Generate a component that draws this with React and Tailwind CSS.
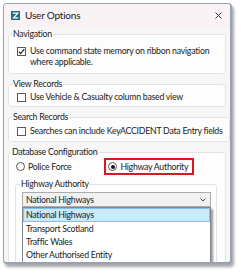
import React from "react";

function Check({ checked }) {
  return (
    <span className="flex h-[9px] w-[9px] shrink-0 items-center justify-center border border-[#5a5a5a] bg-white">
      {checked && (
        <svg width="7" height="7" viewBox="0 0 7 7">
          <path d="M0.8 3.6 L2.7 5.6 L6.3 1.2" fill="none" stroke="#222" strokeWidth="1.2" />
        </svg>
      )}
    </span>
  );
}

function Radio({ checked }) {
  return (
    <span className="flex h-[9px] w-[9px] shrink-0 items-center justify-center rounded-full border border-[#5a5a5a] bg-white">
      {checked && <span className="h-[4px] w-[4px] rounded-full bg-[#111]" />}
    </span>
  );
}

function Group({ title, children, className = "" }) {
  return (
    <fieldset className={`rounded-[3px] border border-[#e3e3e3] bg-[#fdfdfd] pl-[8px] pr-[6px] ${className}`}>
      <legend className="ml-[-5px] px-[1px] leading-[12px] text-[#222]">{title}</legend>
      {children}
    </fieldset>
  );
}

export default function App() {
  return (
    <div className="h-[276px] w-[241px] bg-white" style={{ fontFamily: 'Lato, "Noto Sans", sans-serif' }}>
      <div className="pl-[3px] pt-[3px]">
        <div className="h-[261px] w-[229px] overflow-hidden rounded-[4px] border border-r-2 border-b-2 border-[#98a2b6] bg-[#f6f6f6] shadow-[2px_3px_3px_rgba(0,0,0,0.35)]">
          <div className="flex h-[23px] items-center bg-[#f8f2f5] pl-[7px] pr-[8px]">
            <span className="flex h-[9px] w-[9px] items-center justify-center bg-[#1c6f80]">
              <svg width="7" height="7" viewBox="0 0 7 7">
                <path d="M0.8 1.2 H5.8 L1.5 5.8 H6.3" fill="none" stroke="#fff" strokeWidth="1.2" />
              </svg>
            </span>
            <span className="ml-[5px] text-[10px] tracking-[-0.2px] text-[#1a1a1a]">User Options</span>
            <span className="ml-auto flex">
              <svg width="7" height="7" viewBox="0 0 7 7">
                <path d="M0.5 0.5 L6.5 6.5 M6.5 0.5 L0.5 6.5" stroke="#333" strokeWidth="1" />
              </svg>
            </span>
          </div>

          <div className="flex flex-col gap-[4px] px-[4px] pt-[1px] text-[8.75px] leading-[12px] tracking-[-0.25px] text-[#1a1a1a]">
            <Group title="Navigation" className="pt-[6px] pb-[6px]">
              <div className="flex items-start gap-[4px]">
                <span className="mt-[1px]"><Check checked /></span>
                <span className="whitespace-nowrap leading-[10.5px]">
                  Use command state memory on ribbon navigation
                  <br />
                  where applicable.
                </span>
              </div>
            </Group>

            <Group title="View Records" className="pt-[1px] pb-[3px]">
              <div className="flex items-center gap-[4px]">
                <Check />
                <span className="whitespace-nowrap">Use Vehicle &amp; Casualty column based view</span>
              </div>
            </Group>

            <Group title="Search Records" className="pt-[2px] pb-[4px]">
              <div className="flex items-center gap-[4px]">
                <Check />
                <span className="whitespace-nowrap">Searches can include KeyACCIDENT Data Entry fields</span>
              </div>
            </Group>

            <Group title="Database Configuration" className="!pl-[7px] pt-0 pb-[8px]">
              <div className="flex items-center">
                <div className="flex items-center gap-[3px] whitespace-nowrap">
                  <Radio />
                  <span>Police Force</span>
                </div>
                <div className="ml-[33px] flex h-[17px] items-center gap-[3px] whitespace-nowrap border-2 border-[#e0141e] pl-[2px] pr-[4px]">
                  <Radio checked />
                  <span>Highway Authority</span>
                </div>
              </div>

              <fieldset className="mt-[3px] mr-[2px] ml-[-1px] rounded-[3px] border border-[#e3e3e3] pl-[6px] pr-[5px] pb-[6px]">
                <legend className="ml-[-2px] px-[1px] leading-[12px]">Highway Authority</legend>
                <div className="relative mt-[2px]">
                  <div className="flex h-[15px] items-center justify-between border border-[#acacac] bg-[#f1f1f1] pl-[3px] pr-[4px]">
                    <span>National Highways</span>
                    <svg width="6" height="4" viewBox="0 0 6 4">
                      <path d="M0.5 0.5 L3 3 L5.5 0.5" fill="none" stroke="#444" strokeWidth="1" />
                    </svg>
                  </div>
                  <div className="absolute left-0 right-0 top-[15px] z-10 border border-[#828790] bg-white pb-[2px] shadow-[2px_2px_2px_rgba(0,0,0,0.4)]">
                    <div className="border border-[#7cc3ee] bg-[#cde8f8] pl-[2px] leading-[12px]">National Highways</div>
                    <div className="pl-[3px] leading-[13px]">Transport Scotland</div>
                    <div className="pl-[3px] leading-[13px]">Traffic Wales</div>
                    <div className="pl-[3px] leading-[13px]">Other Authorised Entity</div>
                  </div>
                  <div className="mt-[4px] border border-[#e1e1e1] bg-white pl-[4px] pt-[49px]">
                    <div className="flex items-center gap-[3px]">
                      <span className="text-[8px]">›</span>
                      <Check />
                      <span>Lancashire</span>
                    </div>
                  </div>
                </div>
              </fieldset>
            </Group>
          </div>
        </div>
      </div>
    </div>
  );
}
